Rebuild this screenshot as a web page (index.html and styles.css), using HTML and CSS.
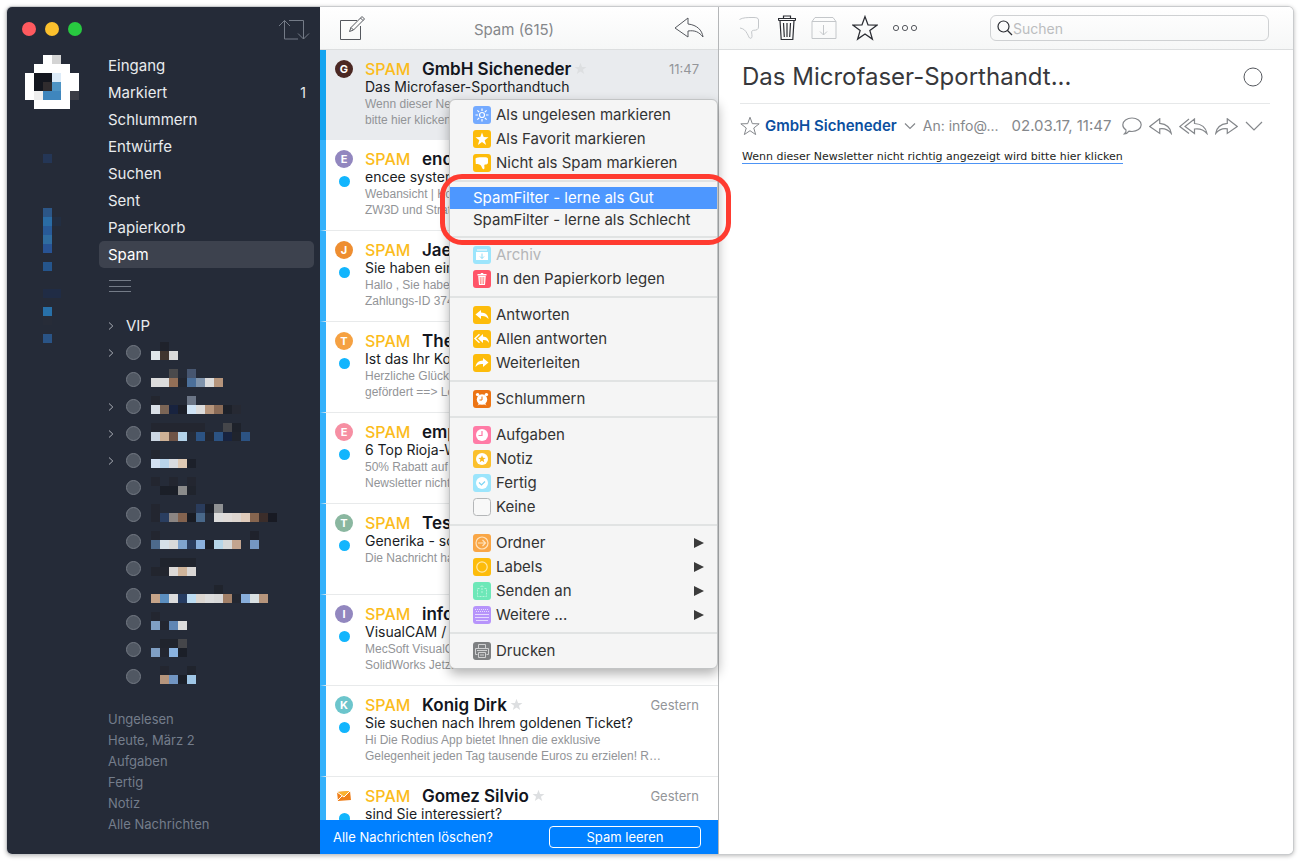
FILE: index.html
```html
<!DOCTYPE html>
<html lang="de">
<head>
<meta charset="utf-8">
<title>Spam (615)</title>
<link rel="stylesheet" href="styles.css">
</head>
<body>
<svg class="defs" aria-hidden="true">
  <symbol id="star" viewBox="0 0 24 24"><path d="M12 1.500l2.800 7.700 8.200.200-6.500 5 2.300 7.900-6.800-4.700-6.800 4.700 2.300-7.900-6.500-5 8.200-.200z"/></symbol>
  <symbol id="reply" viewBox="0 0 30 22"><path d="M14 1L1 11l13 9v-6c7-1 11 1 15 6-1-7-6-12-15-13z"/></symbol>
  <symbol id="chev" viewBox="0 0 18 10"><path d="M1 1l8 8 8-8"/></symbol>
  <symbol id="go" viewBox="0 0 6 8"><path d="M1 .5L4.800 4 1 7.500"/></symbol>
</svg>
<div class="window">
  <aside class="sidebar">
    <header class="sidebar-top">
      <div class="lights"><button class="light red" aria-label="Schließen"></button><button class="light yellow" aria-label="Minimieren"></button><button class="light green" aria-label="Vergrößern"></button></div>
      <button class="icon-btn" aria-label="Aktualisieren"><svg class="line dim" width="32" height="22" viewBox="0 0 32 22"><path d="M6.500 20V1.500M1 7l5.500-5.500L12 7M6.500 20H20M11 1.500h14.500V20M20 14.500l5.500 5.500 5.500-5.500"/></svg></button>
    </header>
    <div class="sidebar-body">
      <div class="accounts">
        <svg width="54" height="288" data-cells="2,0,ffffff 3,0,d4d4d4 1,1,ffffff,4 0,2,ffffff 1,2,14171f,2 3,2,dcebf8 4,2,ffffff,2 0,3,ffffff 1,3,14171f 2,3,302c2e 3,3,4e94c4 4,3,ffffff,2 0,4,ffffff 1,4,eeeeee 2,4,3f86bd,2 4,4,ffffff 5,4,3b3d46 1,5,ffffff,4 2,11,243656 2,17,2c5687 2,18,2a6ca5 3,18,222e42 2,19,285a98 2,20,2f6ca0 2,21,285394 2,23,25558c 2,26,202c45,2 2,28,2870a8 2,29,272c38 2,31,2a5486"></svg>
      </div>
      <nav class="nav">
        <ul class="folders">
          <li><a href="#">Eingang</a></li>
          <li><a href="#">Markiert <span class="count">1</span></a></li>
          <li><a href="#">Schlummern</a></li>
          <li><a href="#">Entwürfe</a></li>
          <li><a href="#">Suchen</a></li>
          <li><a href="#">Sent</a></li>
          <li><a href="#">Papierkorb</a></li>
          <li><a href="#" class="current">Spam</a></li>
        </ul>
        <button class="icon-btn more" aria-label="Mehr"><svg class="line dim" width="22" height="14" viewBox="0 0 22 14"><path d="M0 1.500h22M0 7.500h22M0 12.500h22"/></svg></button>
        <ul class="labels">
          <li><svg class="line go" width="6" height="8"><use href="#go"/></svg><span>VIP</span></li>
          <li><svg class="line go" width="6" height="8"><use href="#go"/></svg><i class="dot"></i><svg width="126" height="22" data-cells="1,0,1f222b 0,1,dfe6ea 1,1,40352f 2,1,d9dada"></svg></li>
          <li><i class="dot"></i><svg width="126" height="22" data-cells="2,0,4a4a4c 4,0,475670 0,1,dcdcdc,2 2,1,936f57 3,1,222630 4,1,4b6f9a 5,1,7f93ab 6,1,dcdcdc 7,1,b6957c"></svg></li>
          <li><svg class="line go" width="6" height="8"><use href="#go"/></svg><i class="dot"></i><svg width="126" height="22" data-cells="0,0,23262f 4,0,6b7586 0,1,d9dfe6 1,1,7b6556 2,1,18233f 3,1,1b1e28 4,1,cfe3f5 5,1,dcdcdc 6,1,b6957c 7,1,8a6b57 8,1,1d212a 9,1,262933"></svg></li>
          <li><svg class="line go" width="6" height="8"><use href="#go"/></svg><i class="dot"></i><svg width="126" height="22" data-cells="0,0,232630,6 8,0,45464a 9,0,1e222b 0,1,ccd7e3 1,1,ceb196 2,1,6f5447 3,1,b4d3ea 5,1,2c5383 6,1,232630 7,1,2c5383 8,1,18233f 9,1,20242d 10,1,2c5383"></svg></li>
          <li><svg class="line go" width="6" height="8"><use href="#go"/></svg><i class="dot"></i><svg width="126" height="22" data-cells="0,0,242730 0,1,d4e2f3 1,1,b8d3ea 2,1,d9dce0 3,1,dfcab4 4,1,1c202a"></svg></li>
          <li><i class="dot"></i><svg width="126" height="22" data-cells="0,0,232630 2,0,232630 4,0,232630 1,1,1b1f28,2 3,1,8b8b8b 4,1,20242d"></svg></li>
          <li><i class="dot"></i><svg width="126" height="22" data-cells="0,0,232630 5,0,2a3c5c 6,0,1c202a 7,0,8f9193 0,1,232630 1,1,2a3e60 2,1,8b8583 3,1,84634f 4,1,191c24 5,1,49688a 7,1,dcdcdc 8,1,dfdad7 9,1,ddd5cf 10,1,dfcbbb 11,1,86654f 12,1,3b2d2a 13,1,181a23"></svg></li>
          <li><i class="dot"></i><svg width="126" height="22" data-cells="0,0,232630 11,0,1f222c 0,1,4d6a8c 1,1,d5e0e8 2,1,d9dada 3,1,7fa3cd 4,1,2a3c5c 5,1,8ab0dc 6,1,1a1e27 7,1,b5d5e8 8,1,d5d8d9 9,1,c2a48f 11,1,7496c2"></svg></li>
          <li><i class="dot"></i><svg width="126" height="22" data-cells="1,0,20242d,4 0,1,22252e,2 2,1,dcd9d6 3,1,cfb49a 4,1,d9d6d4"></svg></li>
          <li><i class="dot"></i><svg width="126" height="22" data-cells="7,0,20242d 0,1,c6a489 1,1,5c8fc0 2,1,dcdcdc 3,1,263c62 4,1,bcdcf2 5,1,dcd6d0 6,1,dcdcdc 7,1,d8d8d8 8,1,a28068 9,1,232731 10,1,88aedb 11,1,d9e0e2 12,1,b6957c"></svg></li>
          <li><i class="dot"></i><svg width="126" height="22" data-cells="0,0,232630 0,1,7f9fc4 1,1,232630 2,1,5f86b4 3,1,dcdcdc"></svg></li>
          <li><i class="dot"></i><svg width="126" height="22" data-cells="1,0,20242d,2 3,0,45464a 0,1,7f9fc4 1,1,232630 2,1,8ab3e0 3,1,1b1f28"></svg></li>
          <li><i class="dot"></i><svg width="126" height="22" data-cells="1,0,232630 4,0,20242d 1,1,b6957c 2,1,7195c2 3,1,1b1f28 4,1,9fc6e6"></svg></li>
        </ul>
        <ul class="filters">
          <li><a href="#">Ungelesen</a></li>
          <li><a href="#">Heute, März 2</a></li>
          <li><a href="#">Aufgaben</a></li>
          <li><a href="#">Fertig</a></li>
          <li><a href="#">Notiz</a></li>
          <li><a href="#">Alle Nachrichten</a></li>
        </ul>
      </nav>
    </div>
  </aside>

  <section class="list-pane">
    <header class="bar list-bar">
      <button class="icon-btn" aria-label="Neue Nachricht"><svg class="line" width="26" height="26" viewBox="0 0 26 26"><path d="M17 5.500H.5v19h20V11M9.500 16.500l1.500-4L22 1.500l2.500 2.500-11 11zM20.500 3l2.500 2.500M11 12.500l2.500 2.500"/></svg></button>
      <h1 class="list-title">Spam (615)</h1>
      <button class="icon-btn" aria-label="Antworten"><svg class="line" width="30" height="22"><use href="#reply"/></svg></button>
    </header>
    <ul class="messages">
      <li class="msg selected"><div class="marks"><b class="avatar brown">G</b></div><div class="text"><div class="from"><span class="tag">SPAM</span><strong>GmbH Sicheneder</strong><svg class="fav" width="13" height="13"><use href="#star"/></svg><time>11:47</time></div><div class="subject">Das Microfaser-Sporthandtuch</div><p class="snippet">Wenn dieser New<br>bitte hier klicken</p></div></li>
      <li class="msg"><div class="marks"><b class="avatar violet">E</b><i class="unread"></i></div><div class="text"><div class="from"><span class="tag">SPAM</span><strong>ence</strong></div><div class="subject">encee system</div><p class="snippet">Webansicht | Kon<br>ZW3D und Strate</p></div></li>
      <li class="msg"><div class="marks"><b class="avatar orange">J</b><i class="unread"></i></div><div class="text"><div class="from"><span class="tag">SPAM</span><strong>Jae</strong></div><div class="subject">Sie haben ein</div><p class="snippet">Hallo , Sie haben<br>Zahlungs-ID 374</p></div></li>
      <li class="msg"><div class="marks"><b class="avatar amber">T</b><i class="unread"></i></div><div class="text"><div class="from"><span class="tag">SPAM</span><strong>The</strong></div><div class="subject">Ist das Ihr Kon</div><p class="snippet">Herzliche Glück<br>gefördert ==&gt; Lo</p></div></li>
      <li class="msg"><div class="marks"><b class="avatar pink">E</b><i class="unread"></i></div><div class="text"><div class="from"><span class="tag">SPAM</span><strong>emp</strong></div><div class="subject">6 Top Rioja-W</div><p class="snippet">50% Rabatt auf<br>Newsletter nicht</p></div></li>
      <li class="msg"><div class="marks"><b class="avatar sage">T</b><i class="unread"></i></div><div class="text"><div class="from"><span class="tag">SPAM</span><strong>Test</strong></div><div class="subject">Generika - so</div><p class="snippet">Die Nachricht hat</p></div></li>
      <li class="msg"><div class="marks"><b class="avatar violet">I</b><i class="unread"></i></div><div class="text"><div class="from"><span class="tag">SPAM</span><strong>info</strong></div><div class="subject">VisualCAM / </div><p class="snippet">MecSoft VisualCA<br>SolidWorks Jetzt</p></div></li>
      <li class="msg"><div class="marks"><b class="avatar teal">K</b><i class="unread"></i></div><div class="text"><div class="from"><span class="tag">SPAM</span><strong>Konig Dirk</strong><svg class="fav" width="13" height="13"><use href="#star"/></svg><time>Gestern</time></div><div class="subject">Sie suchen nach Ihrem goldenen Ticket?</div><p class="snippet">Hi Die Rodius App bietet Ihnen die exklusive<br>Gelegenheit jeden Tag tausende Euros zu erzielen! R…</p></div></li>
      <li class="msg"><div class="marks"><svg class="envelope" width="18" height="18" viewBox="0 0 18 18"><path fill="#ef7f1a" d="M2 5l13-1 1 9-13 1z"/><path fill="#f9b233" d="M2 5l13-1-6 6z"/><path fill="none" stroke="#fff" d="M2 5l7 5 6-6M3 13l4-4"/></svg><i class="unread"></i></div><div class="text"><div class="from"><span class="tag">SPAM</span><strong>Gomez Silvio</strong><svg class="fav" width="13" height="13"><use href="#star"/></svg><time>Gestern</time></div><div class="subject">sind Sie interessiert?</div></div></li>
    </ul>
    <footer class="clear-bar"><span>Alle Nachrichten löschen?</span><button class="clear-btn">Spam leeren</button></footer>

    <div class="menu" role="menu">
      <div class="group">
        <button role="menuitem" class="item"><svg width="18" height="18" viewBox="0 0 18 18"><rect width="18" height="18" rx="3" fill="#74aaff"/><g fill="none" stroke="#fff" stroke-width="1.200"><circle cx="9" cy="9" r="2.500"/><path d="M9 2.500v2.500M9 13v2.500M2.500 9H5M13 9h2.500M4.400 4.400l1.800 1.800M11.800 11.800l1.800 1.800M4.400 13.600l1.800-1.800M11.800 6.200l1.800-1.800"/></g></svg>Als ungelesen markieren</button>
        <button role="menuitem" class="item"><svg width="18" height="18" viewBox="0 0 18 18"><rect width="18" height="18" rx="3" fill="#fdbc0b"/><path fill="#fff" d="M9 2.500l1.700 4.600 4.800.100-3.800 3 1.400 4.700L9 12.100l-4.100 2.800 1.400-4.700-3.800-3 4.800-.100z"/></svg>Als Favorit markieren</button>
        <button role="menuitem" class="item"><svg width="18" height="18" viewBox="0 0 18 18"><rect width="18" height="18" rx="3" fill="#fdbc0b"/><path fill="#fff" d="M2.500 4.500C4.500 3 8 3.300 11 3.300c2 0 4 .2 4 1.700v3.500c0 1.500-1.200 2-2.700 2-.8 0-1.100.5-1 1.500.1 1.500.6 3-.6 3.300-1.200.2-1.500-1.500-2.500-3.300C7.500 10.500 5.500 10 2.800 10z"/></svg>Nicht als Spam markieren</button>
      </div>
      <div class="group marked">
        <button role="menuitem" class="item small active">SpamFilter - lerne als Gut</button>
        <button role="menuitem" class="item small">SpamFilter - lerne als Schlecht</button>
      </div>
      <div class="group">
        <button role="menuitem" class="item" disabled><svg width="18" height="18" viewBox="0 0 18 18"><rect width="18" height="18" rx="3" fill="#9ce5fc"/><path fill="#fff" d="M3 6h12v8H3zM4 3.500h10v1H4z"/><path fill="none" stroke="#8fdcf5" d="M9 7.500v5M7 10.500l2 2 2-2"/></svg>Archiv</button>
        <button role="menuitem" class="item"><svg width="18" height="18" viewBox="0 0 18 18"><rect width="18" height="18" rx="3" fill="#ff5468"/><path fill="#fff" d="M4.500 4h3l.500-1h2l.500 1h3v1.500h-9zM5.200 6h7.600l-.8 9H6z"/><path fill="none" stroke="#ff8f8c" d="M7.200 7l.3 7M9 7v7M10.800 7l-.3 7"/></svg>In den Papierkorb legen</button>
      </div>
      <div class="group">
        <button role="menuitem" class="item"><svg width="18" height="18" viewBox="0 0 18 18"><rect width="18" height="18" rx="3" fill="#fdbc0b"/><path fill="#fff" d="M8 4L2.500 8.500 8 13v-3c3.500-.300 5.500.500 7.500 3-.500-4-3-6.300-7.500-6.500z"/></svg>Antworten</button>
        <button role="menuitem" class="item"><svg width="18" height="18" viewBox="0 0 18 18"><rect width="18" height="18" rx="3" fill="#fdbc0b"/><path fill="#fff" d="M10 4L5 8.500l5 4.500v-3c3-.300 4.500.500 6 3-.300-4-2.500-6.300-6-6.500z"/><path fill="none" stroke="#fff" stroke-width="1.400" d="M6.500 4.200L2 8.500l4.500 4.300"/></svg>Allen antworten</button>
        <button role="menuitem" class="item"><svg width="18" height="18" viewBox="0 0 18 18"><rect width="18" height="18" rx="3" fill="#fdbc0b"/><path fill="#fff" d="M10 4l5.500 4.500L10 13v-3c-3.500-.300-5.500.500-7.500 3 .5-4 3-6.300 7.500-6.500z"/></svg>Weiterleiten</button>
      </div>
      <div class="group">
        <button role="menuitem" class="item"><svg width="18" height="18" viewBox="0 0 18 18"><rect width="18" height="18" rx="3" fill="#ec7414"/><g fill="#fff"><circle cx="9" cy="9.500" r="5.200"/><circle cx="4.600" cy="4.600" r="1.700"/><circle cx="13.400" cy="4.600" r="1.700"/><path d="M4.500 15.500l2-2.500 1 1zM13.500 15.500l-2-2.500-1 1z"/></g><path fill="none" stroke="#ec7414" d="M9 6.500v3.500H6.500"/></svg>Schlummern</button>
      </div>
      <div class="group">
        <button role="menuitem" class="item"><svg width="18" height="18" viewBox="0 0 18 18"><rect width="18" height="18" rx="3" fill="#ff7ba6"/><circle cx="9" cy="9" r="6" fill="#fff"/><path fill="none" stroke="#ff7ba6" stroke-width="1.200" d="M9 5v4.500H5.500"/></svg>Aufgaben</button>
        <button role="menuitem" class="item"><svg width="18" height="18" viewBox="0 0 18 18"><rect width="18" height="18" rx="3" fill="#fbc02d"/><circle cx="9" cy="9" r="6" fill="#fff"/><path fill="#fbb81c" d="M9 5.200l1 2.600 2.700.1-2.100 1.700.7 2.700L9 10.800l-2.300 1.500.7-2.700-2.100-1.700 2.700-.1z"/></svg>Notiz</button>
        <button role="menuitem" class="item"><svg width="18" height="18" viewBox="0 0 18 18"><rect width="18" height="18" rx="3" fill="#9ce5fc"/><circle cx="9" cy="9" r="6" fill="#fff"/><path fill="none" stroke="#7cd4f3" stroke-width="1.200" d="M6 8.500L8.500 11 12 7.500"/></svg>Fertig</button>
        <button role="menuitem" class="item"><svg width="18" height="18" viewBox="0 0 18 18"><rect x=".5" y=".5" width="17" height="17" rx="3" fill="#f8f8f8" stroke="#b4b6b8"/></svg>Keine</button>
      </div>
      <div class="group">
        <button role="menuitem" class="item sub"><svg width="18" height="18" viewBox="0 0 18 18"><rect width="18" height="18" rx="3" fill="#f9a646"/><g fill="none" stroke="#ffe3bd" stroke-width="1.200"><circle cx="9" cy="9" r="6"/><path d="M5 9h7.500M9.500 6l3 3-3 3"/></g></svg>Ordner</button>
        <button role="menuitem" class="item sub"><svg width="18" height="18" viewBox="0 0 18 18"><rect width="18" height="18" rx="3" fill="#fdbc0b"/><circle cx="9" cy="9" r="5.200" fill="none" stroke="#ffe9a8" stroke-width="1.200"/></svg>Labels</button>
        <button role="menuitem" class="item sub"><svg width="18" height="18" viewBox="0 0 18 18"><rect width="18" height="18" rx="3" fill="#6de8b8"/><path fill="none" stroke="#b4f4da" stroke-dasharray="2 1" d="M6.500 6.500h-2v8h9v-8h-2M9 11V3.500M7.500 5L9 3.500 10.500 5"/></svg>Senden an</button>
        <button role="menuitem" class="item sub"><svg width="18" height="18" viewBox="0 0 18 18"><rect width="18" height="18" rx="3" fill="#b794fb"/><path fill="none" stroke="#e6dafe" d="M2 8.500h14M2 11.500h14M3 14.500h12"/><path fill="none" stroke="#e6dafe" stroke-dasharray="1 1" d="M2 3.500h14M3 5.500h13"/></svg>Weitere ...</button>
      </div>
      <div class="group">
        <button role="menuitem" class="item"><svg width="18" height="18" viewBox="0 0 18 18"><rect width="18" height="18" rx="3" fill="#7e8082"/><g fill="none" stroke="#d0d1d2"><path d="M5.500 6.500v-4h7v4M4.500 12.500h-2v-6h13v6h-2M5.500 10.500h7v5h-7zM7 13h4M4 8.500h10"/></g></svg>Drucken</button>
      </div>
    </div>
  </section>

  <main class="detail">
    <header class="bar detail-bar">
      <button class="icon-btn" aria-label="Spam"><svg class="line faint" width="24" height="24" viewBox="0 0 24 24"><path d="M.5 3.500C4 1.500 8 1.500 14 1.500c3 0 5.500.2 5.500 2.500v7c0 2.500-2 3.300-5 3.300-1.500 0-2 1-1.800 2.700.3 2.500.8 5-.9 5.300-2 .3-2-2.300-3.800-5C6.500 14.500 4.500 12.500 1 12"/></svg></button>
      <button class="icon-btn" aria-label="Löschen"><svg class="line dark" width="18" height="26" viewBox="0 0 18 26"><path d="M.5 5.500v-2h17v2M2 5.500l1.200 19h11.600l1.200-19M5.500 3.500v-2.500h7v2.500M.5 5.500h17M5.500 8l.8 14M9 8v14M12.500 8l-.8 14"/></svg></button>
      <button class="icon-btn" aria-label="Archiv"><svg class="line faint" width="26" height="24" viewBox="0 0 26 24"><path d="M1 5.500h24v17H1zM1 5.500l3-4h18l3 4M12.500 9v10M9 15.500l3.500 3.500 3.500-3.500"/></svg></button>
      <button class="icon-btn" aria-label="Favorit"><svg class="line dark" width="26" height="26"><use href="#star"/></svg></button>
      <button class="icon-btn" aria-label="Mehr"><svg class="line" width="26" height="8" viewBox="0 0 26 8"><circle cx="3" cy="4" r="2.600"/><circle cx="12" cy="4" r="2.600"/><circle cx="21" cy="4" r="2.600"/></svg></button>
      <label class="search"><svg class="line dark" width="16" height="16" viewBox="0 0 16 16"><circle cx="6.500" cy="6.500" r="5.500"/><path d="M10.500 10.500l4.500 4.500"/></svg><input type="search" placeholder="Suchen" aria-label="Suchen"></label>
    </header>
    <article class="mail">
      <div class="mail-head"><h2>Das Microfaser-Sporthandt...</h2><button class="icon-btn" aria-label="Erledigt"><svg class="line" width="20" height="20" viewBox="0 0 20 20"><circle cx="10" cy="10" r="9"/></svg></button></div>
      <div class="meta">
        <svg class="line grey" width="20" height="20"><use href="#star"/></svg>
        <a href="#" class="sender">GmbH Sicheneder</a>
        <svg class="line grey" width="12" height="8" viewBox="0 0 12 8"><path d="M1 1.500l5 5 5-5"/></svg>
        <span class="to">An: info@...</span>
        <time>02.03.17, 11:47</time>
        <div class="actions">
          <button class="icon-btn" aria-label="Chat"><svg class="line grey" width="20" height="18" viewBox="0 0 20 18"><path d="M4 13C1.500 11.500.800 9.500.800 7.800.800 4 5 1 10 1s9.200 3 9.200 6.800-4.200 6.700-9.200 6.700c-1 0-2-.1-3-.4C6 15.500 4.500 16.800 2.500 16.800 3.800 15.800 4.300 14.500 4 13z"/></svg></button>
          <button class="icon-btn" aria-label="Antworten"><svg class="line reply-icon" width="23" height="17"><use href="#reply"/></svg></button>
          <button class="icon-btn" aria-label="Allen antworten"><svg class="line grey" width="29" height="17" viewBox="0 0 29 17"><path d="M15.500 1L6 8.500l9.500 7v-4.500c5.500-.800 9 .500 12.500 4.500-1-5.500-5-9.500-12.500-10zM10 1L.800 8.500 10 15.500"/></svg></button>
          <button class="icon-btn" aria-label="Weiterleiten"><svg class="line reply-icon flip" width="23" height="17"><use href="#reply"/></svg></button>
          <button class="icon-btn" aria-label="Mehr"><svg class="line grey" width="18" height="10"><use href="#chev"/></svg></button>
        </div>
      </div>
      <a href="#" class="mail-link">Wenn dieser Newsletter nicht richtig angezeigt wird bitte hier klicken</a>
    </article>
  </main>
</div>
<script src="mosaic.js"></script>
</body>
</html>
```
FILE: mosaic.js
```js
// Each cell reads "column,row,colour[,span]" on a 9px grid.
const CELL = 9;
document.querySelectorAll("svg[data-cells]").forEach((svg) => {
  svg.dataset.cells.split(" ").forEach((cell) => {
    const [col, row, colour, span = 1] = cell.split(",");
    const rect = document.createElementNS("http://www.w3.org/2000/svg", "rect");
    rect.setAttribute("x", col * CELL);
    rect.setAttribute("y", row * CELL);
    rect.setAttribute("width", span * CELL);
    rect.setAttribute("height", CELL);
    rect.setAttribute("fill", "#" + colour);
    svg.appendChild(rect);
  });
});
```
FILE: styles.css
```css
* { box-sizing: border-box; }
body { margin: 0; padding: 7px; background: #fff; font: 15px/20px Inter, "Liberation Sans", sans-serif; color: #333; }
ul { list-style: none; margin: 0; padding: 0; }
h1, h2, p { margin: 0; font-weight: 400; }
a { color: inherit; text-decoration: none; }
button { font: inherit; color: inherit; background: none; border: 0; padding: 0; }
svg { display: block; flex: none; }
.defs { position: absolute; width: 0; height: 0; }
.line { fill: none; stroke: #55585e; stroke-width: 1; }
.dim { stroke: #747b87; }
.faint { stroke: #c4c7ca; }
.dark { stroke: #2b2d33; stroke-width: 1.200; }
.grey { stroke: #85888c; stroke-width: 1.200; }
.reply-icon { stroke: #85888c; stroke-width: 1.600; }
.flip { transform: scaleX(-1); }
.icon-btn { display: flex; align-items: center; }

.window { display: grid; grid-template-columns: 313px 399px minmax(0, 1fr); height: calc(100vh - 14px); min-height: 600px; border-radius: 5px; box-shadow: 0 0 0 1px #c9cbcd, 0 1px 4px 1px #bbb; }

.sidebar { background: #252b38; color: #e9ebee; border-radius: 5px 0 0 5px; overflow: hidden; }
.sidebar-top { display: flex; justify-content: space-between; align-items: center; height: 45px; padding: 0 10px 0 15px; }
.lights { display: flex; gap: 9px; padding-bottom: 1px; }
.light { width: 14px; height: 14px; border-radius: 50%; }
.red { background: #ff5a5f; }
.yellow { background: #fbc02d; }
.green { background: #28c940; }
.sidebar-body { display: grid; grid-template-columns: 92px 1fr; }
.accounts { padding: 3px 0 0 18px; }
.nav { padding-right: 6px; }
.folders a { display: flex; justify-content: space-between; align-items: center; height: 27px; padding: 0 8px 0 9px; border-radius: 5px; }
.folders .current { background: #3d424e; color: #fff; }
.count { font-size: 14px; }
.more { padding: 11px 10px; }
.labels { padding-top: 8px; }
.labels li { display: flex; align-items: center; height: 27px; padding-left: 27px; }
.labels .go { width: 6px; margin-left: -18px; margin-right: 12px; stroke: #a9adb5; }
.dot { width: 15px; height: 15px; margin-right: 10px; border: 1px solid #747a84; border-radius: 50%; background: #505762; }
.filters { padding: 19px 0 0 9px; font-size: 13px; line-height: 21px; color: #747d8b; }

.list-pane { position: relative; z-index: 1; display: flex; flex-direction: column; min-width: 0; min-height: 0; border-right: 1px solid #b4b6b8; background: #fff; }
.bar { display: flex; align-items: center; flex: none; height: 43px; background: linear-gradient(#fff, #f6f7f7); border-bottom: 1px solid #dcdedf; }
.list-bar { justify-content: space-between; padding: 0 14px 0 20px; }
.list-title { padding: 4px 12px 0 0; font-size: 15px; color: #85878a; }
.messages { flex: 1; min-height: 0; overflow: hidden; }
.msg { display: flex; height: 91px; padding: 9px 19px 0 9px; border-left: 6px solid #34b1fb; border-bottom: 1px solid #e8eaeb; }
.selected { height: 90px; background: #e9ebee; border-left-color: #14a4f0; border-bottom: 0; }
.marks { display: flex; flex-direction: column; align-items: center; gap: 8px; width: 18px; margin-right: 12px; padding-top: 1px; }
.avatar { width: 18px; height: 18px; border-radius: 50%; color: #fff; font-size: 11px; line-height: 18px; text-align: center; }
.brown { background: #4b2823; }
.violet { background: #9287bf; }
.orange { background: #ee8e31; }
.amber { background: #f5a142; }
.pink { background: #f68fa3; }
.sage { background: #8ab7a0; }
.teal { background: #6cc5cc; }
.unread { width: 11px; height: 11px; border-radius: 50%; background: #12b5fd; }
.text { flex: 1; min-width: 0; white-space: nowrap; }
.from { display: flex; align-items: center; height: 19px; font-size: 16px; }
.from strong { font-size: 17px; font-weight: 600; color: #12151d; }
.tag { color: #fbbc1c; font-weight: 500; width: 57px; }
.fav { margin-left: 3px; fill: #dddfe1; }
.from time { margin-left: auto; font-size: 13px; color: #939599; }
.subject { font-size: 14px; line-height: 18px; color: #191c24; }
.snippet { font: 12px/16px "Liberation Sans", sans-serif; color: #929497; }
.clear-bar { display: flex; align-items: center; justify-content: space-between; flex: none; height: 34px; padding: 0 17px 0 13px; background: #0080ff; color: #fff; font-size: 13px; }
.clear-btn { width: 152px; height: 22px; border: 1px solid #fff; border-radius: 4px; }

.menu { position: absolute; left: 129px; top: 92px; width: 269px; padding: 3px 0 5px; border: 1px solid #c2c4c5; border-radius: 6px; background: #f5f5f5; box-shadow: 0 5px 12px rgba(0, 0, 0, .3); color: #333; }
.group + .group { margin-top: 5px; padding-top: 5px; border-top: 2px solid #e1e3e3; }
.item { display: flex; align-items: center; gap: 5px; width: 100%; height: 24px; padding: 0 13px 0 23px; text-align: left; }
.small { height: 22px; }
.active { background: #4d97ff; color: #fff; }
.item:disabled { color: #b4b6b8; }
.sub::after { content: ""; margin-left: auto; border: solid transparent; border-width: 5px 0 5px 10px; border-left-color: #3b3b3b; }
.marked { position: relative; }
.marked::after { content: ""; position: absolute; inset: -8px -14px -14px -10px; border: 5px solid #ff3b30; border-radius: 22px; pointer-events: none; }

.detail { min-width: 0; background: #fff; border-radius: 0 5px 5px 0; overflow: hidden; }
.detail-bar { gap: 15px; padding: 0 24px 0 20px; }
.search { display: flex; align-items: center; flex: 0 1 279px; min-width: 0; height: 26px; margin-left: auto; padding: 0 6px; border: 1px solid #cfd1d3; border-radius: 6px; }
.search input { flex: 1; min-width: 0; border: 0; padding: 1px 0 0; outline: 0; background: none; font: 14px Inter, sans-serif; }
.search input::placeholder { color: #bbbdbf; opacity: 1; }
.mail { padding: 0 23px 0 21px; }
.mail-head { display: flex; align-items: center; justify-content: space-between; height: 54px; padding: 0 7px 0 2px; border-bottom: 1px solid #e6e8e9; }
.mail h2 { font-size: 24px; line-height: 32px; color: #37383c; }
.meta { display: flex; align-items: center; height: 44px; padding-right: 7px; font-size: 15px; color: #85888c; white-space: nowrap; }
.sender { margin: 0 7px 0 5px; color: #0b4fa0; font-weight: 600; }
.to { margin: 0 13px 0 7px; font-size: 14px; }
.actions { display: flex; align-items: center; gap: 7px; margin-left: auto; }
.mail-link { display: block; width: fit-content; margin: 2px 0 0 2px; font: 11px/13px "DejaVu Sans", sans-serif; color: #1c1e22; border-bottom: 1px solid #4d94f5; white-space: nowrap; }
```
